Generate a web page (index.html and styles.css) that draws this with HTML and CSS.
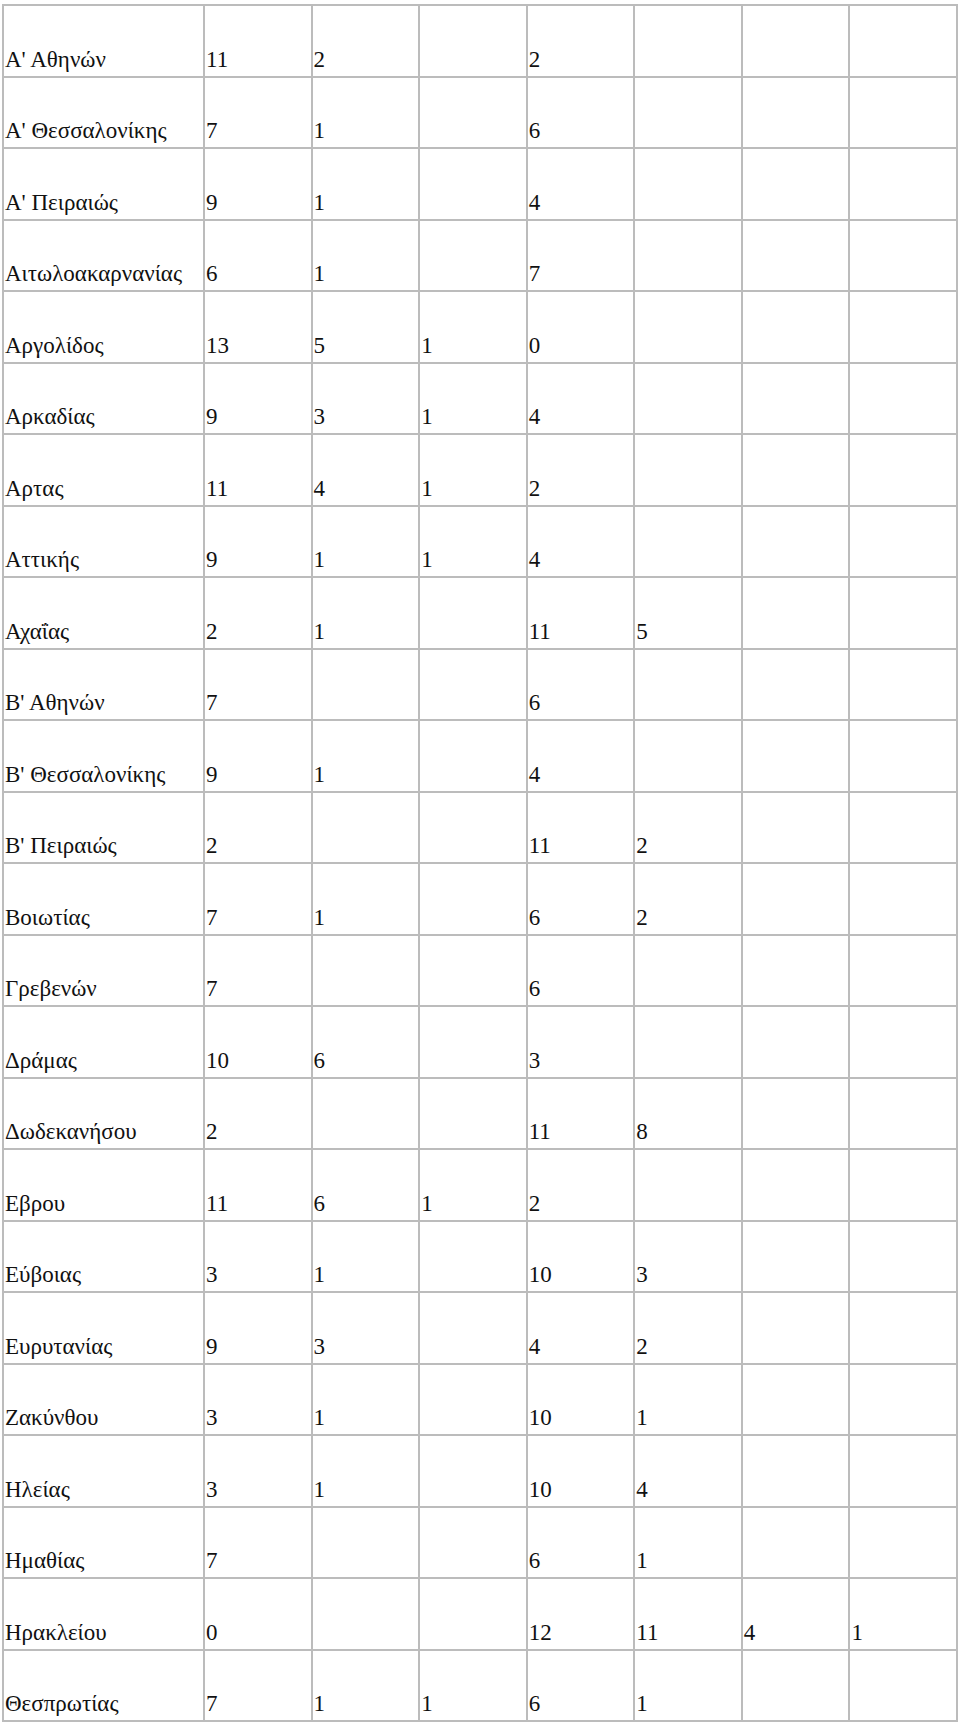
FILE: index.html
```html
<!DOCTYPE html>
<html lang="el">
<head>
<meta charset="utf-8">
<title>Πίνακας</title>
<link rel="stylesheet" href="styles.css">
</head>
<body>
<table class="grid">
<colgroup><col class="c-name"><col><col><col><col><col><col><col></colgroup>
<tbody>
<tr><td>Α' Αθηνών</td><td>11</td><td>2</td><td></td><td>2</td><td></td><td></td><td></td></tr>
<tr><td>Α' Θεσσαλονίκης</td><td>7</td><td>1</td><td></td><td>6</td><td></td><td></td><td></td></tr>
<tr><td>Α' Πειραιώς</td><td>9</td><td>1</td><td></td><td>4</td><td></td><td></td><td></td></tr>
<tr><td>Αιτωλοακαρνανίας</td><td>6</td><td>1</td><td></td><td>7</td><td></td><td></td><td></td></tr>
<tr><td>Αργολίδος</td><td>13</td><td>5</td><td>1</td><td>0</td><td></td><td></td><td></td></tr>
<tr><td>Αρκαδίας</td><td>9</td><td>3</td><td>1</td><td>4</td><td></td><td></td><td></td></tr>
<tr><td>Αρτας</td><td>11</td><td>4</td><td>1</td><td>2</td><td></td><td></td><td></td></tr>
<tr><td>Αττικής</td><td>9</td><td>1</td><td>1</td><td>4</td><td></td><td></td><td></td></tr>
<tr><td>Αχαΐας</td><td>2</td><td>1</td><td></td><td>11</td><td>5</td><td></td><td></td></tr>
<tr><td>Β' Αθηνών</td><td>7</td><td></td><td></td><td>6</td><td></td><td></td><td></td></tr>
<tr><td>Β' Θεσσαλονίκης</td><td>9</td><td>1</td><td></td><td>4</td><td></td><td></td><td></td></tr>
<tr><td>Β' Πειραιώς</td><td>2</td><td></td><td></td><td>11</td><td>2</td><td></td><td></td></tr>
<tr><td>Βοιωτίας</td><td>7</td><td>1</td><td></td><td>6</td><td>2</td><td></td><td></td></tr>
<tr><td>Γρεβενών</td><td>7</td><td></td><td></td><td>6</td><td></td><td></td><td></td></tr>
<tr><td>Δράμας</td><td>10</td><td>6</td><td></td><td>3</td><td></td><td></td><td></td></tr>
<tr><td>Δωδεκανήσου</td><td>2</td><td></td><td></td><td>11</td><td>8</td><td></td><td></td></tr>
<tr><td>Εβρου</td><td>11</td><td>6</td><td>1</td><td>2</td><td></td><td></td><td></td></tr>
<tr><td>Εύβοιας</td><td>3</td><td>1</td><td></td><td>10</td><td>3</td><td></td><td></td></tr>
<tr><td>Ευρυτανίας</td><td>9</td><td>3</td><td></td><td>4</td><td>2</td><td></td><td></td></tr>
<tr><td>Ζακύνθου</td><td>3</td><td>1</td><td></td><td>10</td><td>1</td><td></td><td></td></tr>
<tr><td>Ηλείας</td><td>3</td><td>1</td><td></td><td>10</td><td>4</td><td></td><td></td></tr>
<tr><td>Ημαθίας</td><td>7</td><td></td><td></td><td>6</td><td>1</td><td></td><td></td></tr>
<tr><td>Ηρακλείου</td><td>0</td><td></td><td></td><td>12</td><td>11</td><td>4</td><td>1</td></tr>
<tr><td>Θεσπρωτίας</td><td>7</td><td>1</td><td>1</td><td>6</td><td>1</td><td></td><td></td></tr>
</tbody>
</table>
</body>
</html>
```

FILE: styles.css
```css
html, body {
  margin: 0;
  padding: 0;
  background: #ffffff;
}
body {
  padding: 4px 2px 0 2px;
  font-family: "Liberation Serif", "Times New Roman", serif;
  font-size: 23px;
  color: #111111;
}
.grid {
  width: 956px;
  table-layout: fixed;
  border-collapse: collapse;
  font-family: "Liberation Serif", "Times New Roman", serif;
  font-size: 23px;
}
.grid .c-name {
  width: 201px;
}
.grid td {
  height: 71.5px;
  border: 2px solid #bcbcbc;
  padding: 0 2px 4px 1px;
  vertical-align: bottom;
  white-space: nowrap;
  line-height: 25px;
  box-sizing: border-box;
}
```
